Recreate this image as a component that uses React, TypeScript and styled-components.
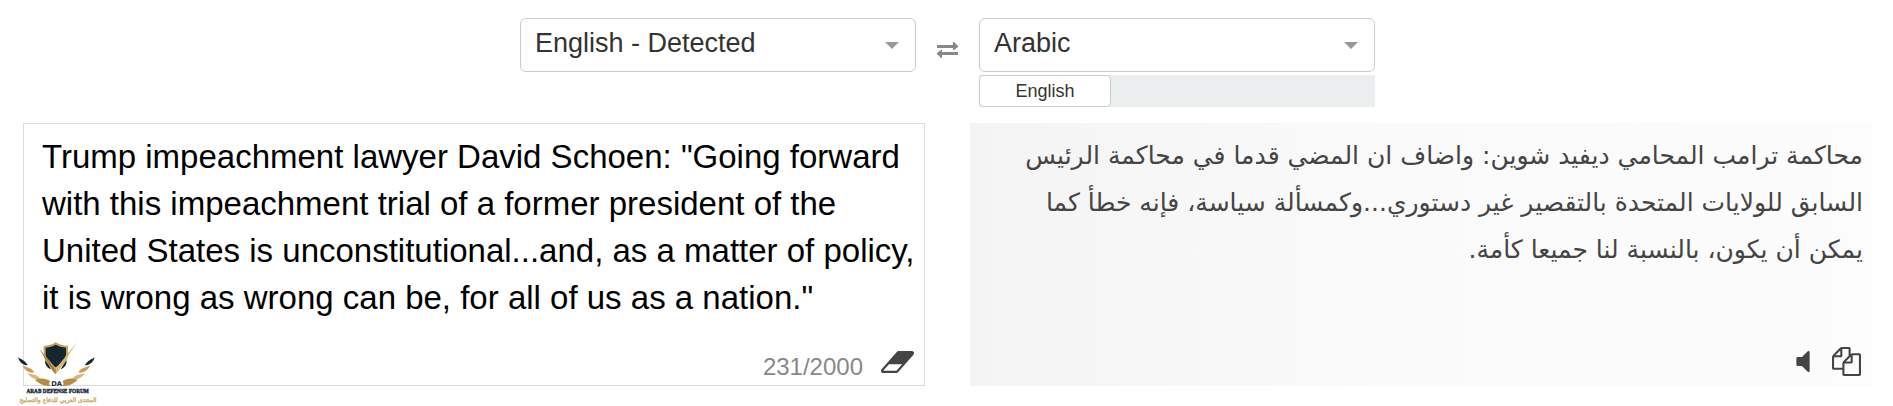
import React, { useState } from "react";
import styled, { createGlobalStyle } from "styled-components";

const GlobalStyle = createGlobalStyle`
  *, *::before, *::after { box-sizing: border-box; }
  body {
    margin: 0;
    background: #fff;
    color: #333;
    font-family: "Liberation Sans", Arial, sans-serif;
  }
`;

const Page = styled.main`
  padding: 18px 21px 20px 23px;
`;

const LanguageBar = styled.header`
  display: flex;
  justify-content: center;
  align-items: flex-start;
  margin-bottom: 16px;
`;

const LanguageColumn = styled.div`
  display: flex;
  flex-direction: column;
  flex: 0 1 396px;
  gap: 3px;
`;

const SelectBox = styled.label`
  display: grid;
  grid-template-columns: 1fr 31px;
  align-items: center;
`;

const Select = styled.select`
  grid-area: 1 / 1 / 2 / 3;
  appearance: none;
  width: 100%;
  height: 54px;
  padding: 0 40px 4px 14px;
  border: 1px solid #ccc;
  border-radius: 6px;
  background: #fff;
  color: #333;
  font: 27px "Liberation Sans", Arial, sans-serif;
`;

const Caret = styled.svg`
  grid-area: 1 / 2 / 2 / 3;
  width: 14px;
  height: 7px;
  fill: #999;
  pointer-events: none;
`;

const RecentStrip = styled.div`
  display: flex;
  background: #eaeeef;
`;

const RecentButton = styled.button`
  width: 132px;
  height: 32px;
  padding: 0;
  border: 1px solid #ccc;
  border-radius: 4px;
  background: #fff;
  color: #333;
  font: 18px "Liberation Sans", Arial, sans-serif;
`;

const IconButton = styled.button`
  display: flex;
  align-items: center;
  justify-content: center;
  padding: 0;
  border: 0;
  background: none;
  color: #444;
`;

const SwapButton = styled(IconButton)`
  width: 63px;
  height: 64px;
  color: #888;
`;

const Panels = styled.div`
  display: grid;
  grid-template-columns: 1fr 1fr;
  gap: 45px;
`;

const Panel = styled.section`
  position: relative;
  display: flex;
  flex-direction: column;
  min-width: 0;
  border: 1px solid #dcdcdc;
`;

const ResultPanel = styled(Panel)`
  border-color: transparent;
  background: linear-gradient(to right, #f4f4f4, #fafafa 45%, #fcfcfc) border-box;
`;

const SourceText = styled.textarea`
  display: block;
  width: 100%;
  height: 198px;
  padding: 9px 8px 0 18px;
  border: 0;
  outline: 0;
  resize: none;
  overflow: hidden;
  background: transparent;
  color: #000;
  font: 33px/47px "Liberation Sans", Arial, sans-serif;
`;

const ResultText = styled.p`
  flex: 1;
  margin: 0;
  padding: 8px 8px 0 18px;
  color: #444;
  font: 25px/47px "DejaVu Sans", sans-serif;
`;

const Footer = styled.footer<{ $gap: number }>`
  display: flex;
  justify-content: flex-end;
  align-items: center;
  gap: ${(p) => p.$gap}px;
  height: 63px;
  padding: 16px 10px 0 0;
`;

const Counter = styled.span`
  padding-top: 10px;
  color: #888;
  font-size: 24px;
  line-height: 28px;
`;

const Logo = styled.svg`
  position: absolute;
  left: -9px;
  bottom: -21px;
  width: 85px;
  height: 66px;
`;

const SOURCE =
  'Trump impeachment lawyer David Schoen: "Going forward with this impeachment trial of a former president of the United States is unconstitutional...and, as a matter of policy, it is wrong as wrong can be, for all of us as a nation."';

const RESULT =
  "محاكمة ترامب المحامي ديفيد شوين: واضاف ان المضي قدما في محاكمة الرئيس السابق للولايات المتحدة بالتقصير غير دستوري...وكمسألة سياسة، فإنه خطأ كما يمكن أن يكون، بالنسبة لنا جميعا كأمة.";

function LanguageSelect({ label, options }: { label: string; options: string[] }) {
  return (
    <SelectBox>
      <Select aria-label={label}>
        {options.map((o) => (
          <option key={o}>{o}</option>
        ))}
      </Select>
      <Caret viewBox="0 0 14 7" aria-hidden="true">
        <path d="M0 0h14L7 7z" />
      </Caret>
    </SelectBox>
  );
}

function ForumLogo() {
  const feathers = (
    <>
      <path fill="#152631" d="M54 112C62 118 76 121 83 136C72 137 58 128 54 112Z" />
      <path fill="#c9a057" d="M67 136C77 143 94 141 103 157C89 161 74 152 67 136Z" />
      <path fill="#d7b774" d="M83 158C94 165 109 160 121 176C107 181 91 173 83 158Z" />
      <path fill="#b98c43" d="M105 180C119 174 136 173 151 184C145 190 147 195 153 197C134 200 118 192 105 180Z" />
    </>
  );
  return (
    <Logo viewBox="45 60 255 198" role="img" aria-label="Arab Defense Forum">
      {feathers}
      <g transform="translate(338 0) scale(-1 1)">{feathers}</g>
      <path fill="#c9a057" d="M131 78C146 77 157 74 167 67C178 74 189 77 204 78V105C203 122 188 138 167 151C146 138 132 122 131 105Z" />
      <path fill="#152631" d="M137 83C149 82 159 78 167 74C176 78 186 82 198 83V104C196 118 184 131 167 142C150 131 138 118 137 104Z" />
      <path fill="#152631" d="M135 121L148 137L153 148C142 144 134 134 135 121ZM200 121L188 137L182 148C193 144 201 134 200 121Z" />
      <path fill="#d7b774" d="M118 86L154 129L167 144L181 129L231 66L177 151L167 163L158 152Z" />
      <path fill="#a97b35" d="M118 86L167 149V163L158 152Z" />
      <text x="170" y="199" textAnchor="middle" fill="#152631" fontFamily="DejaVu Sans" fontWeight="700" fontSize="20">DA</text>
      <text x="173" y="219" textAnchor="middle" fill="#152631" stroke="#152631" strokeWidth="1" fontFamily="Liberation Serif" fontWeight="700" fontSize="16">ARAB DEFENSE FORUM</text>
      <text x="174" y="246" textAnchor="middle" direction="rtl" fill="#d0a860" stroke="#d0a860" strokeWidth="1" fontFamily="DejaVu Sans" fontSize="18">المنتدى العربي للدفاع والتسليح</text>
    </Logo>
  );
}

export default function App() {
  const [text, setText] = useState(SOURCE);
  return (
    <Page>
      <GlobalStyle />
      <LanguageBar>
        <LanguageColumn>
          <LanguageSelect label="Source language" options={["English - Detected", "English", "Arabic"]} />
        </LanguageColumn>
        <SwapButton type="button" aria-label="Swap languages">
          <svg width="21" height="16" viewBox="0 0 21 16" fill="currentColor" aria-hidden="true">
            <path d="M0 3h16V0h1l4 4v1l-4 3h-1V6H0zM21 10v3H5v3H4l-4-4v-1l4-3h1v2z" />
          </svg>
        </SwapButton>
        <LanguageColumn>
          <LanguageSelect label="Target language" options={["Arabic", "English"]} />
          <RecentStrip>
            <RecentButton type="button">English</RecentButton>
          </RecentStrip>
        </LanguageColumn>
      </LanguageBar>
      <Panels>
        <Panel>
          <SourceText
            aria-label="Text to translate"
            spellCheck={false}
            maxLength={2000}
            value={text}
            onChange={(e) => setText(e.target.value)}
          />
          <Footer $gap={18}>
            <Counter>{text.length}/2000</Counter>
            <IconButton type="button" aria-label="Clear text" onClick={() => setText("")}>
              <svg width="33" height="22" viewBox="64 256 1920 1280" fill="currentColor" aria-hidden="true">
                <path d="M960 1408l336-384h-768l-336 384h768zm1013-1077q15 34 9.5 71.5t-30.5 65.5l-896 1024q-38 44-96 44h-768q-38 0-69.5-20.5t-47.5-54.5q-15-34-9.5-71.5t30.5-65.5l896-1024q38-44 96-44h768q38 0 69.5 20.5t47.5 54.5z" />
              </svg>
            </IconButton>
          </Footer>
          <ForumLogo />
        </Panel>
        <ResultPanel>
          <ResultText dir="rtl" lang="ar">{RESULT}</ResultText>
          <Footer $gap={22}>
            <IconButton type="button" aria-label="Listen">
              <svg width="14" height="21" viewBox="512 288 768 1216" fill="currentColor" aria-hidden="true">
                <path d="M1280 352v1088q0 26-19 45t-45 19-45-19l-333-333h-262q-26 0-45-19t-19-45v-384q0-26 19-45t45-19h262l333-333q19-19 45-19t45 19 19 45z" />
              </svg>
            </IconButton>
            <IconButton type="button" aria-label="Copy translation">
              <svg width="29" height="29" viewBox="0 0 1792 1792" fill="currentColor" aria-hidden="true">
                <path d="M1696 384q40 0 68 28t28 68v1216q0 40-28 68t-68 28h-960q-40 0-68-28t-28-68v-288h-544q-40 0-68-28t-28-68v-672q0-40 20-88t48-76l408-408q28-28 76-48t88-20h416q40 0 68 28t28 68v328q68-40 128-40h416zm-544 213l-299 299h299v-299zm-640-384l-299 299h299v-299zm196 647l316-316v-416h-384v416q0 40-28 68t-68 28h-416v640h512v-256q0-40 20-88t48-76zm956 804v-1152h-384v416q0 40-28 68t-68 28h-416v640h896z" />
              </svg>
            </IconButton>
          </Footer>
        </ResultPanel>
      </Panels>
    </Page>
  );
}
